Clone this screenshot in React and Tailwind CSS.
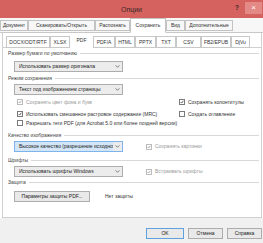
import React from 'react';

const Check = ({ checked, dim }) => (
  <span
    className={`flex h-[6px] w-[6px] shrink-0 items-center justify-center border bg-white ${
      dim ? 'border-[#bcbcbc]' : 'border-[#7a7a7a]'
    }`}
  >
    {checked && (
      <svg viewBox="0 0 6 6" className="h-[6px] w-[6px]">
        <path d="M1 3.2 L2.4 4.6 L5 1.2" fill="none" stroke={dim ? '#8a8a8a' : '#222'} strokeWidth="1.1" />
      </svg>
    )}
  </span>
);

const CheckRow = ({ checked, dim, children }) => (
  <div className="flex items-center gap-[3px] whitespace-nowrap">
    <Check checked={checked} dim={dim} />
    <span className={dim ? 'text-[#9a9a9a]' : 'text-[#333]'}>{children}</span>
  </div>
);

const Label = ({ children, className = '' }) => (
  <div className={`flex h-[8px] items-center pl-[5px] pr-[2px] ${className}`}>
    <span className="text-[#444]">{children}</span>
    <span className="ml-[3px] h-px flex-1 bg-[#d8d8d8]" />
  </div>
);

const Select = ({ children, active, className = '' }) => (
  <div
    className={`flex h-[11px] w-[109px] shrink-0 items-center overflow-hidden border ${
      active ? 'border-[#7eb4ea]' : 'border-[#adadad]'
    } bg-[#ececec] ${className}`}
  >
    <span
      className={`flex h-full min-w-0 flex-1 items-center overflow-hidden whitespace-nowrap pl-[4px] ${
        active ? 'bg-[#d3e6f8] text-[#222]' : 'text-[#222]'
      }`}
    >
      {children}
    </span>
    <span className="flex h-full w-[9px] shrink-0 items-center justify-center">
      <svg viewBox="0 0 6 4" className="h-[3px] w-[5px]">
        <path d="M0.5 0.5 L3 3 L5.5 0.5" fill="none" stroke="#444" strokeWidth="0.9" />
      </svg>
    </span>
  </div>
);

const topTabs = [
  ['Документ', 'w-[28px]'],
  ['Сканировать/Открыть', 'w-[67px]'],
  ['Распознать', 'w-[35px]'],
  ['Сохранить', 'w-[36px]', true],
  ['Вид', 'w-[19px]'],
  ['Дополнительные', 'w-[48px]'],
];

const subTabs = [
  ['DOCX/ODT/RTF', 'w-[44px]'],
  ['XLSX', 'w-[20px]'],
  ['PDF', 'w-[23px]', true],
  ['PDF/A', 'w-[22px]'],
  ['HTML', 'w-[20px]'],
  ['PPTX', 'w-[21px]'],
  ['TXT', 'w-[20px]'],
  ['CSV', 'w-[25px]'],
  ['FB2/EPUB', 'w-[30px]'],
  ['DjVu', 'w-[19px]'],
];

const App = () => {
  return (
    <div className="flex h-[243px] w-[263px] flex-col overflow-hidden bg-white font-['Liberation_Sans',sans-serif] text-[5px] leading-none text-[#333]">
      {/* Title bar */}
      <div className="relative flex h-[18px] shrink-0 items-center justify-center bg-[#d5625e]">
        <span className="text-[7px] text-[#3a2a2a]">Опции</span>
        <span className="absolute right-[24px] top-[5px] text-[6.5px] font-bold text-[#3a2a2a]">?</span>
        <span className="absolute right-[1px] top-[2px] flex h-[12px] w-[17px] items-center justify-center bg-[#e48a86] text-[8px] text-white">
          ×
        </span>
      </div>

      {/* Top tabs */}
      <div className="flex h-[15px] shrink-0 items-end border-b border-[#c8c8c8] bg-[#f7f7f7]">
        {topTabs.map(([t, w, sel]) => (
          <div
            key={t}
            className={`-mb-px flex shrink-0 items-center justify-center whitespace-nowrap border border-[#c3c3c3] ${w} ${
              sel ? 'h-[15px] border-b-white bg-white' : 'mb-px h-[11px] bg-[#f7f7f7]'
            } text-[#333]`}
          >
            {t}
          </div>
        ))}
      </div>

      {/* Sub tabs */}
      <div className="ml-[2px] mr-[1px] flex h-[15px] shrink-0 items-end border-x border-b border-[#d0d0d0] bg-white pl-[3px]">
        {subTabs.map(([t, w, sel]) => (
          <div
            key={t}
            className={`-mb-px flex shrink-0 items-center justify-center whitespace-nowrap border ${w} ${
              sel ? 'h-[15px] border-white bg-white' : 'h-[12px] border-[#c8c8c8] bg-white'
            } text-[#333]`}
          >
            {t}
          </div>
        ))}
      </div>

      {/* Content panel */}
      <div className="ml-[2px] mr-[1px] flex flex-col border-x border-b border-[#d0d0d0] bg-white pb-[15px]">
        <Label className="mt-px">Размер бумаги по умолчанию</Label>
        <Select className="ml-[11px] mt-[4px]">Использовать размер оригинала</Select>

        <Label className="mt-[2px]">Режим сохранения</Label>
        <Select className="ml-[11px] mt-[2px]">Текст под изображением страницы</Select>

        <div className="mt-[3px] grid h-[8px] grid-cols-[162px_1fr] items-center pl-[14px]">
          <CheckRow checked dim>Сохранять цвет фона и букв</CheckRow>
          <CheckRow checked>Сохранять колонтитулы</CheckRow>
        </div>
        <div className="mt-[4px] grid h-[8px] grid-cols-[162px_1fr] items-center pl-[14px]">
          <CheckRow checked>Использовать смешанное растровое содержание (MRC)</CheckRow>
          <CheckRow>Создать оглавление</CheckRow>
        </div>
        <div className="mt-px flex h-[8px] items-center pl-[14px]">
          <CheckRow>Разрешать теги PDF (для Acrobat 5.0 или более поздней версии)</CheckRow>
        </div>

        <Label className="mt-[4px]">Качество изображения</Label>
        <div className="mt-[2px] grid grid-cols-[132px_1fr] items-center pl-[11px]">
          <Select active>Высокое качество (разрешение исходного изображения)</Select>
          <CheckRow checked dim>Сохранять картинки</CheckRow>
        </div>

        <Label className="mt-[4px]">Шрифты</Label>
        <div className="mt-[2px] grid grid-cols-[132px_1fr] items-center pl-[11px]">
          <Select>Использовать шрифты Windows</Select>
          <CheckRow checked dim>Встраивать шрифты</CheckRow>
        </div>

        <Label className="mt-px">Защита</Label>
        <div className="mt-[5px] flex items-center pl-[11px]">
          <button className="flex h-[11px] w-[76px] items-center justify-center border border-[#adadad] bg-[#e9e9e9] text-[#222]">
            Параметры защиты PDF...
          </button>
          <span className="ml-[15px] text-[#333]">Нет защиты</span>
        </div>
      </div>

      {/* Footer */}
      <div className="flex flex-1 items-start justify-end gap-[4px] bg-[#f0f0f0] pr-[1px] pt-[10px]">
        <button className="flex h-[11px] w-[38px] items-center justify-center border border-[#5fa0de] bg-[#e9e9e9] text-[#222]">
          OK
        </button>
        <button className="flex h-[11px] w-[35px] items-center justify-center border border-[#adadad] bg-[#e9e9e9] text-[#222]">
          Отмена
        </button>
        <button className="flex h-[11px] w-[35px] items-center justify-center border border-[#adadad] bg-[#e9e9e9] text-[#222]">
          Справка
        </button>
      </div>
    </div>
  );
};

export default App;
